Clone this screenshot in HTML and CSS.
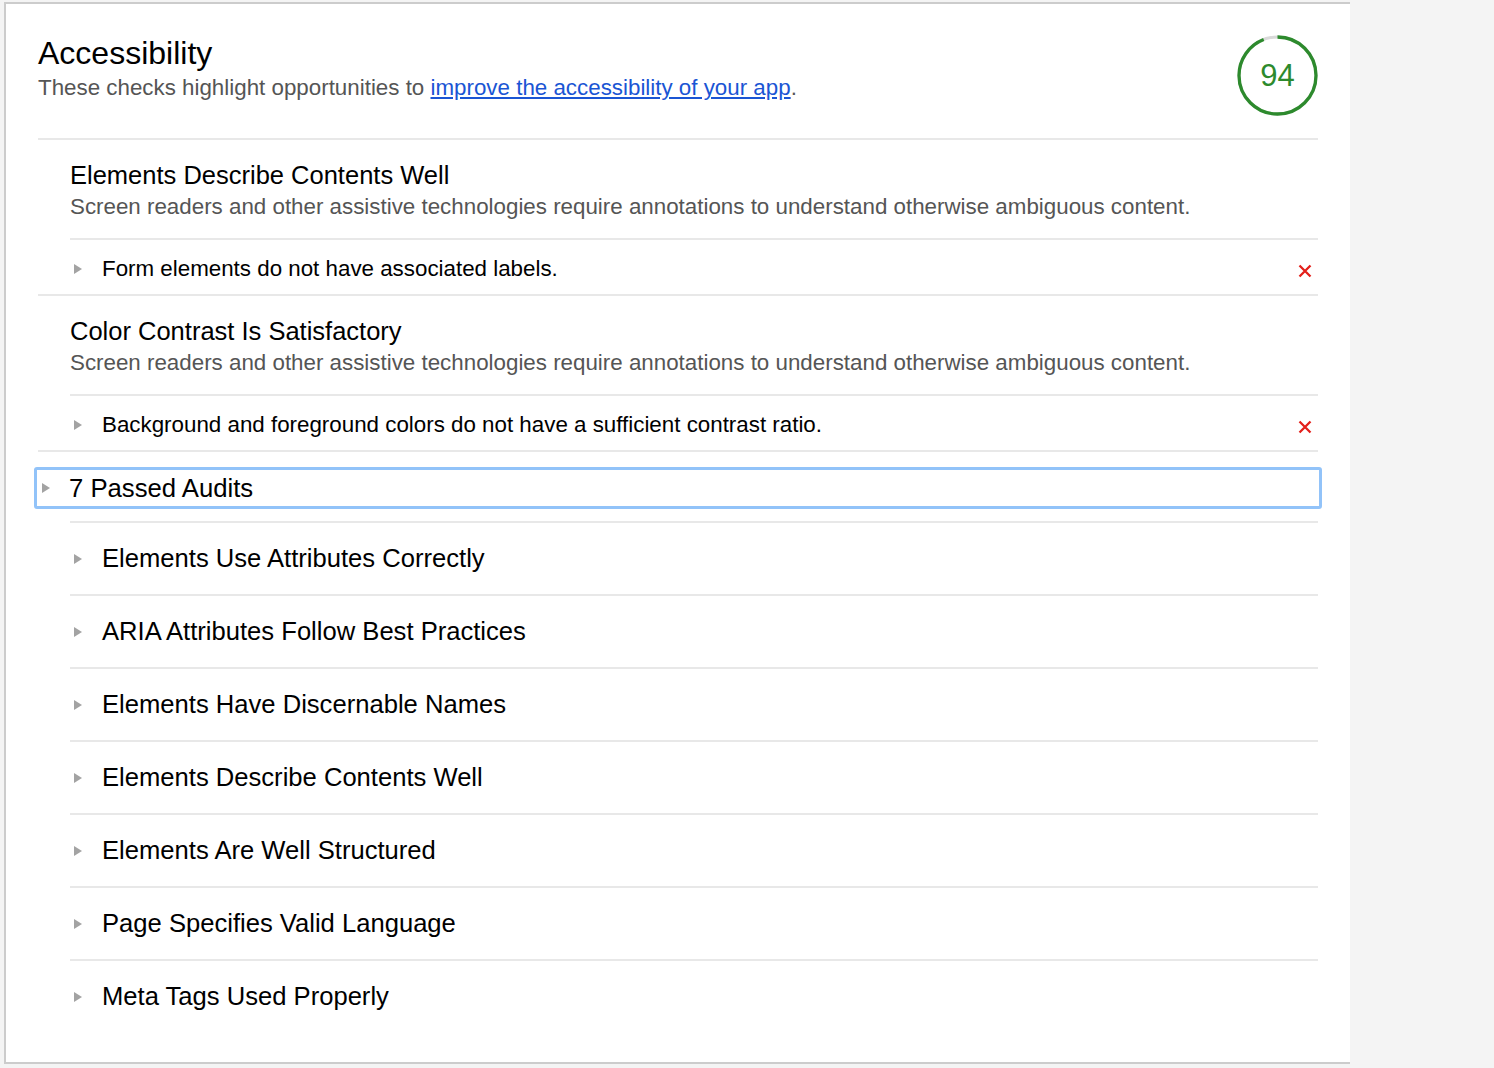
FILE: index.html
```html
<!DOCTYPE html>
<html lang="en">
<head>
<meta charset="utf-8">
<title>Accessibility</title>
<link rel="stylesheet" href="styles.css">
</head>
<body>
<div class="page">
  <section class="panel">
    <header class="head">
      <div class="head-text">
        <h1 class="title">Accessibility</h1>
        <p class="sub">These checks highlight opportunities to <a class="link" href="#">improve the accessibility of your app</a>.</p>
      </div>
      <div class="score">
        <svg class="gauge" width="81" height="81" viewBox="0 0 81 81">
          <circle cx="40.5" cy="40.5" r="38.5" fill="none" stroke="#d9d9d9" stroke-width="3"/>
          <circle cx="40.5" cy="40.5" r="38.5" fill="none" stroke="#2d8a2d" stroke-width="3.3" stroke-dasharray="227.4 241.9" transform="rotate(-90 40.5 40.5)"/>
        </svg>
        <span class="score-num">94</span>
      </div>
    </header>

    <div class="group">
      <div class="group-head">
        <h2 class="group-title">Elements Describe Contents Well</h2>
        <p class="group-desc">Screen readers and other assistive technologies require annotations to understand otherwise ambiguous content.</p>
      </div>
      <div class="audit">
        <svg class="tri" width="8" height="10" viewBox="0 0 8 10"><polygon points="0,0 8,5 0,10" fill="#a3a3a3"/></svg>
        <span class="audit-label">Form elements do not have associated labels.</span>
        <svg class="fail" width="14" height="14" viewBox="0 0 14 14"><path d="M1.5 1.5 L12.5 12.5 M12.5 1.5 L1.5 12.5" stroke="#e3201b" stroke-width="2.3" fill="none"/></svg>
      </div>
    </div>

    <div class="group">
      <div class="group-head">
        <h2 class="group-title">Color Contrast Is Satisfactory</h2>
        <p class="group-desc">Screen readers and other assistive technologies require annotations to understand otherwise ambiguous content.</p>
      </div>
      <div class="audit">
        <svg class="tri" width="8" height="10" viewBox="0 0 8 10"><polygon points="0,0 8,5 0,10" fill="#a3a3a3"/></svg>
        <span class="audit-label">Background and foreground colors do not have a sufficient contrast ratio.</span>
        <svg class="fail" width="14" height="14" viewBox="0 0 14 14"><path d="M1.5 1.5 L12.5 12.5 M12.5 1.5 L1.5 12.5" stroke="#e3201b" stroke-width="2.3" fill="none"/></svg>
      </div>
    </div>

    <div class="passed-toggle">
      <svg class="tri" width="8" height="10" viewBox="0 0 8 10"><polygon points="0,0 8,5 0,10" fill="#a3a3a3"/></svg>
      <span class="passed-label">7 Passed Audits</span>
    </div>

    <ul class="passed-list">
      <li class="passed-item"><svg class="tri" width="8" height="10" viewBox="0 0 8 10"><polygon points="0,0 8,5 0,10" fill="#a3a3a3"/></svg><span>Elements Use Attributes Correctly</span></li>
      <li class="passed-item"><svg class="tri" width="8" height="10" viewBox="0 0 8 10"><polygon points="0,0 8,5 0,10" fill="#a3a3a3"/></svg><span>ARIA Attributes Follow Best Practices</span></li>
      <li class="passed-item"><svg class="tri" width="8" height="10" viewBox="0 0 8 10"><polygon points="0,0 8,5 0,10" fill="#a3a3a3"/></svg><span>Elements Have Discernable Names</span></li>
      <li class="passed-item"><svg class="tri" width="8" height="10" viewBox="0 0 8 10"><polygon points="0,0 8,5 0,10" fill="#a3a3a3"/></svg><span>Elements Describe Contents Well</span></li>
      <li class="passed-item"><svg class="tri" width="8" height="10" viewBox="0 0 8 10"><polygon points="0,0 8,5 0,10" fill="#a3a3a3"/></svg><span>Elements Are Well Structured</span></li>
      <li class="passed-item"><svg class="tri" width="8" height="10" viewBox="0 0 8 10"><polygon points="0,0 8,5 0,10" fill="#a3a3a3"/></svg><span>Page Specifies Valid Language</span></li>
      <li class="passed-item"><svg class="tri" width="8" height="10" viewBox="0 0 8 10"><polygon points="0,0 8,5 0,10" fill="#a3a3a3"/></svg><span>Meta Tags Used Properly</span></li>
    </ul>
  </section>
</div>
</body>
</html>
```

FILE: styles.css
```css
html, body {
  margin: 0;
  padding: 0;
  background: #f4f4f4;
  font-family: "Liberation Sans", Arial, Helvetica, sans-serif;
  color: #000;
}

.page {
  padding: 2px 0 0 4px;
  min-height: 1068px;
  box-sizing: border-box;
}

.panel {
  width: 1346px;
  box-sizing: border-box;
  background: #fff;
  border-top: 2px solid #cccccc;
  border-left: 2px solid #cccccc;
  border-bottom: 2px solid #cccccc;
  padding: 0 32px 30px 32px;
}

.head {
  display: flex;
  justify-content: space-between;
  align-items: flex-start;
  height: 136px;
  box-sizing: border-box;
  padding: 30px 0 0;
  border-bottom: 2px solid #e8e8e8;
}

.title {
  margin: 0;
  font-size: 32px;
  line-height: 38px;
  font-weight: normal;
  color: #000;
}

.sub {
  margin: 3px 0 0;
  font-size: 22.35px;
  line-height: 26px;
  color: #555;
}

.link {
  color: #1a55d4;
  text-decoration: underline;
}

.score {
  position: relative;
  width: 81px;
  height: 81px;
  margin-top: 1px;
}

.gauge {
  display: block;
}

.score-num {
  position: absolute;
  inset: 0;
  display: flex;
  align-items: center;
  justify-content: center;
  font-size: 31px;
  color: #2d8a2d;
}

.group {
  border-bottom: 2px solid #e8e8e8;
}

.group-head {
  margin-left: 32px;
  height: 100px;
  box-sizing: border-box;
  padding-top: 20px;
  border-bottom: 2px solid #e8e8e8;
}

.group-title {
  margin: 0;
  font-size: 25.5px;
  line-height: 30px;
  font-weight: normal;
  color: #000;
}

.group-desc {
  margin: 5px 0 0;
  font-size: 22.35px;
  line-height: 24px;
  color: #555;
}

.audit {
  display: flex;
  align-items: center;
  margin-left: 32px;
  height: 54px;
  box-sizing: border-box;
  padding-top: 3px;
}

.tri {
  flex: none;
  display: block;
}

.audit .tri {
  margin-left: 4px;
  margin-right: 20px;
}

.audit-label {
  flex: 1;
  font-size: 22.35px;
  color: #000;
}

.fail {
  flex: none;
  margin-right: 6px;
  margin-top: 4px;
}

.passed-toggle {
  display: flex;
  align-items: center;
  margin: 15px -4px 0;
  height: 42px;
  box-sizing: border-box;
  border: 3px solid #92c3f9;
  border-radius: 3px;
}

.passed-toggle .tri {
  margin-left: 5px;
  margin-right: 19px;
}

.passed-label {
  font-size: 25.7px;
  color: #000;
}

.passed-list {
  list-style: none;
  margin: 12px 0 0 32px;
  padding: 0;
}

.passed-item {
  display: flex;
  align-items: center;
  height: 73px;
  box-sizing: border-box;
  border-top: 2px solid #e8e8e8;
  font-size: 25.6px;
  color: #000;
}

.passed-item .tri {
  margin-left: 4px;
  margin-right: 20px;
}
```
